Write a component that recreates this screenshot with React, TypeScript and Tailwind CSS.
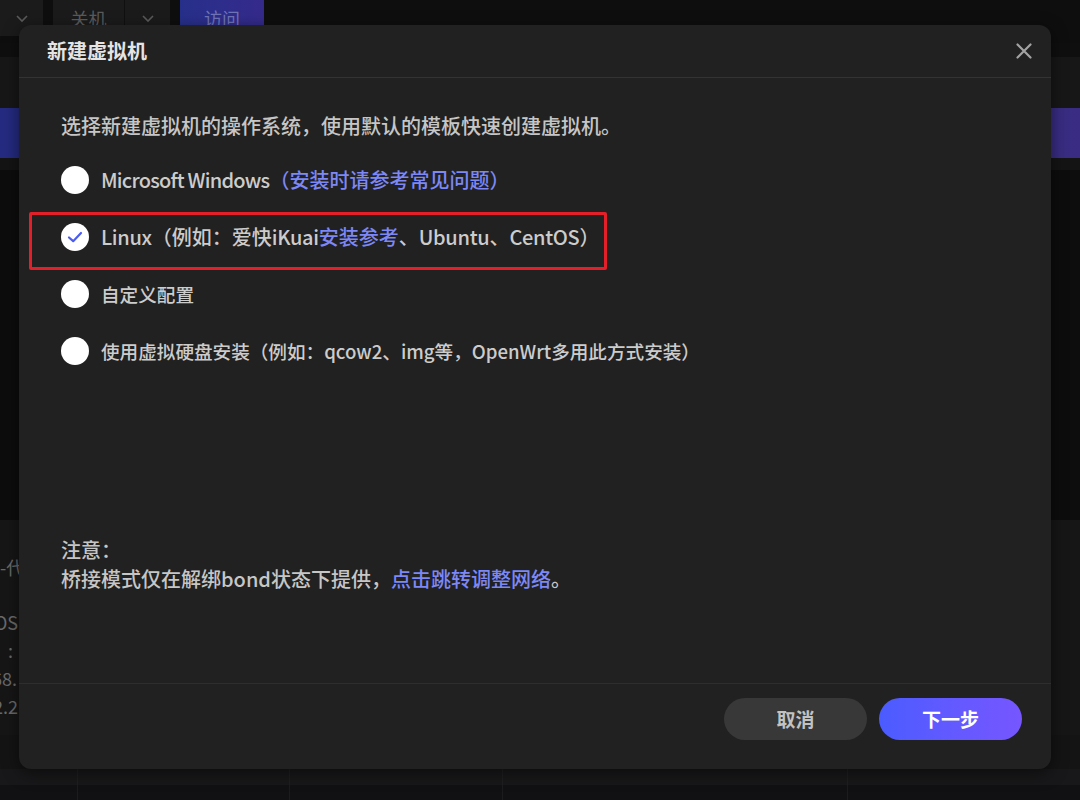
import React from "react";

const font = { fontFamily: '"Noto Sans CJK SC", "Noto Sans", sans-serif' };

function L({ t, children }: { t: string; children: React.ReactNode }) {
  return <span className={t}>{children}</span>;
}

function Radio({ checked }: { checked?: boolean }) {
  return (
    <div className="w-[28px] h-[28px] rounded-full bg-white flex items-center justify-center shrink-0">
      {checked && (
        <svg width="18" height="18" viewBox="0 0 18 18" fill="none">
          <path d="M3 9.5 L7.2 13.2 L15 5" stroke="#4b5cf2" strokeWidth="2.2" strokeLinecap="round" strokeLinejoin="round" />
        </svg>
      )}
    </div>
  );
}

function Option({ checked, size, children }: { checked?: boolean; size: string; children: React.ReactNode }) {
  return (
    <div className="h-[57px] flex items-center gap-[12px]">
      <Radio checked={checked} />
      <div className={`${size} font-medium text-[#cccccc] whitespace-nowrap`}>{children}</div>
    </div>
  );
}

export default function App() {
  return (
    <div className="relative w-[1080px] h-[800px] overflow-hidden bg-[#0e0e0f]" style={font}>
      {/* background page (dimmed) */}
      <div className="flex flex-col h-full">
        <div className="h-[43px] overflow-hidden">
          <div className="flex items-start gap-[10px] -mt-[8px]">
            <div className="h-[44px] w-[43px] rounded-r-lg bg-[#1b1b1c] flex items-center justify-end pr-[14px] pt-[8px]">
              <svg width="14" height="10" viewBox="0 0 14 10"><path d="M2 3 L7 8 L12 3" stroke="#5a5a5a" strokeWidth="1.6" fill="none" /></svg>
            </div>
            <div className="h-[44px] w-[117px] rounded-lg bg-[#1b1b1c] flex items-center">
              <span className="w-[71px] text-center text-[#5a5a5a] text-[18px] pt-[8px]">关机</span>
              <div className="w-px h-full bg-[#101010]" />
              <div className="flex-1 flex justify-center pt-[8px]">
                <svg width="14" height="10" viewBox="0 0 14 10"><path d="M2 3 L7 8 L12 3" stroke="#5a5a5a" strokeWidth="1.6" fill="none" /></svg>
              </div>
            </div>
            <div className="h-[44px] w-[84px] rounded-lg bg-gradient-to-r from-[#26308a] to-[#352a8c] flex items-center justify-center text-[#6f74b8] text-[18px] pt-[8px]">访问</div>
          </div>
        </div>
        <div className="h-[14px] bg-[#0f0f10]" />
        <div className="h-[51px] bg-[#171718]" />
        <div className="h-[50px] bg-gradient-to-r from-[#252b80] to-[#392c82]" />
        <div className="h-[12px] bg-[#141415]" />
        <div className="h-[350px] bg-[#0d0d0e]" />
        <div className="h-[215px] bg-[#161617] flex flex-col pt-[33px] text-[#6a6a6a] text-[18px] leading-[28px] -ml-[8px]">
          <div className="pl-[8px]">-代</div>
          <div className="h-[27px]" />
          <div className="pl-[2px]">OS</div>
          <div className="pl-[16px]">:</div>
          <div>68.</div>
          <div className="pl-[1px]">2.2</div>
        </div>
        <div className="h-[34px] bg-[#141415]" />
        <div className="h-[16px] bg-[#18181a] flex">
          <div className="w-[78px] border-r border-[#1f1f21]" />
          <div className="w-[212px] border-r border-[#1f1f21]" />
          <div className="w-[213px] border-r border-[#1f1f21]" />
          <div className="w-[345px] border-r border-[#1f1f21]" />
        </div>
        <div className="flex-1 bg-[#111113] flex">
          <div className="w-[78px] border-r border-[#1c1c1e]" />
          <div className="w-[212px] border-r border-[#1c1c1e]" />
          <div className="w-[213px] border-r border-[#1c1c1e]" />
          <div className="w-[345px] border-r border-[#1c1c1e]" />
        </div>
      </div>

      {/* modal */}
      <div className="absolute left-[19px] top-[25px] w-[1032px] h-[744px] rounded-[12px] bg-[#212121] shadow-[0_4px_16px_rgba(0,0,0,0.5)] flex flex-col">
        <div className="h-[53px] shrink-0 flex items-center justify-between pl-[28px] pr-[18px] border-b border-[#333333]">
          <div className="text-[20px] font-bold text-[#e4e4e4]">新建虚拟机</div>
          <svg width="18" height="18" viewBox="0 0 18 18">
            <path d="M2.5 2.5 L15.5 15.5 M15.5 2.5 L2.5 15.5" stroke="#a3a3a3" strokeWidth="2.2" strokeLinecap="round" />
          </svg>
        </div>
        <div className="flex-1 flex flex-col px-[42px] pt-[34px]">
          <div className="text-[20px] leading-[28px] font-medium text-[#c6c6c6] whitespace-nowrap">选择新建虚拟机的操作系统，使用默认的模板快速创建虚拟机。</div>
          <div className="mt-[11px] flex flex-col">
            <Option size="text-[20px]">
              <L t="tracking-[-0.75px]">Microsoft Windows</L><span className="text-[#7d88f6]">（安装时请参考常见问题）</span>
            </Option>
            <Option checked size="text-[20px]">
              <L t="tracking-[-0.3px]">Linux</L>（例如：爱快<L t="tracking-[-0.3px]">iKuai</L><span className="text-[#7d88f6]">安装参考</span>、<L t="tracking-[-0.3px]">Ubuntu</L>、<L t="tracking-[-0.3px]">CentOS</L>）
            </Option>
            <Option size="text-[18.6px]">自定义配置</Option>
            <Option size="text-[18.6px]">
              使用虚拟硬盘安装（例如：qcow2、img等，OpenWrt多用此方式安装）
            </Option>
          </div>
          <div className="mt-[156px] text-[20px] leading-[29px] font-medium text-[#c6c6c6] whitespace-nowrap">
            <div>注意：</div>
            <div>
              桥接模式仅在解绑bond状态下提供，<span className="text-[#7d88f6]">点击跳转调整网络</span>。
            </div>
          </div>
        </div>
        <div className="h-[86px] shrink-0 border-t border-[#2e2e2e] flex justify-end items-start gap-[12px] pt-[14px] pr-[29px]">
          <button className="w-[143px] h-[42px] rounded-full bg-[#383838] text-[#c2c2c2] text-[19px] font-bold">取消</button>
          <button className="w-[143px] h-[42px] rounded-full bg-gradient-to-r from-[#4a5cff] to-[#7656ff] text-white text-[19px] font-bold">下一步</button>
        </div>

        {/* annotation */}
        <div className="absolute left-[10px] top-[187px] w-[578px] h-[58px] border-[3px] border-[#e3202a] rounded-[2px] pointer-events-none" />
      </div>
    </div>
  );
}
